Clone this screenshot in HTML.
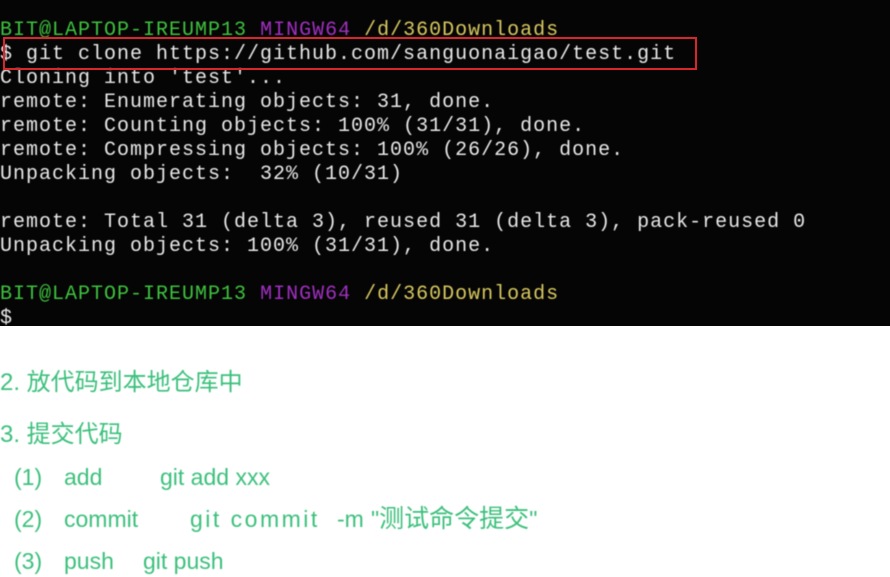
<!DOCTYPE html>
<html><head><meta charset="utf-8"><style>
body{margin:0;width:890px;height:577px;background:#fff;overflow:hidden;position:relative}
#t{position:absolute;left:0;top:0;width:890px;height:326px;background:#050505}
.l{position:absolute;left:0;font-family:"Liberation Mono",monospace;font-size:20px;letter-spacing:1px;color:#e8e8e8;white-space:pre;line-height:24px;filter:blur(0.4px)}
.g{color:#3fc23f}.p{color:#a030c0}.y{color:#d8c860}
#box{position:absolute;left:3px;top:37px;width:694px;height:33px;border:2px solid #d8262a;box-sizing:border-box}
.c{position:absolute;font-family:"Liberation Sans","Noto Sans CJK SC",sans-serif;font-size:23px;line-height:28px;color:#3cc07c;white-space:pre;filter:blur(0.5px)}
.c span{position:absolute;top:0}
.h{font-size:24px}
</style></head><body>
<div id="t">
<div class="l" style="top:19px"><span class="g">BIT@LAPTOP-IREUMP13</span> <span class="p">MINGW64</span> <span class="y">/d/360Downloads</span></div>
<div class="l" style="top:43px">$ git clone https://github.com/sanguonaigao/test.git</div>
<div class="l" style="top:67px">Cloning into 'test'...</div>
<div class="l" style="top:91px">remote: Enumerating objects: 31, done.</div>
<div class="l" style="top:115px">remote: Counting objects: 100% (31/31), done.</div>
<div class="l" style="top:139px">remote: Compressing objects: 100% (26/26), done.</div>
<div class="l" style="top:163px">Unpacking objects:  32% (10/31)</div>
<div class="l" style="top:211px">remote: Total 31 (delta 3), reused 31 (delta 3), pack-reused 0</div>
<div class="l" style="top:235px">Unpacking objects: 100% (31/31), done.</div>
<div class="l" style="top:283px"><span class="g">BIT@LAPTOP-IREUMP13</span> <span class="p">MINGW64</span> <span class="y">/d/360Downloads</span></div>
<div class="l" style="top:307px">$</div>
<div id="box"></div>
</div>
<div class="c h" style="left:0;top:369px">2. 放代码到本地仓库中</div>
<div class="c h" style="left:0;top:421px">3. 提交代码</div>
<div class="c" style="left:0;top:463px;width:890px"><span style="left:14px">(1)</span><span style="left:64px">add</span><span style="left:160px">git add xxx</span></div>
<div class="c" style="left:0;top:505px;width:890px"><span style="left:14px">(2)</span><span style="left:64px">commit</span><span style="left:190px;letter-spacing:2.5px">git commit</span><span style="left:337px">-m</span><span style="left:371px">"<span style="position:static;font-size:25px">测试命令提交</span>"</span></div>
<div class="c" style="left:0;top:547px;width:890px"><span style="left:14px">(3)</span><span style="left:64px">push</span><span style="left:143px">git push</span></div>
</body></html>
